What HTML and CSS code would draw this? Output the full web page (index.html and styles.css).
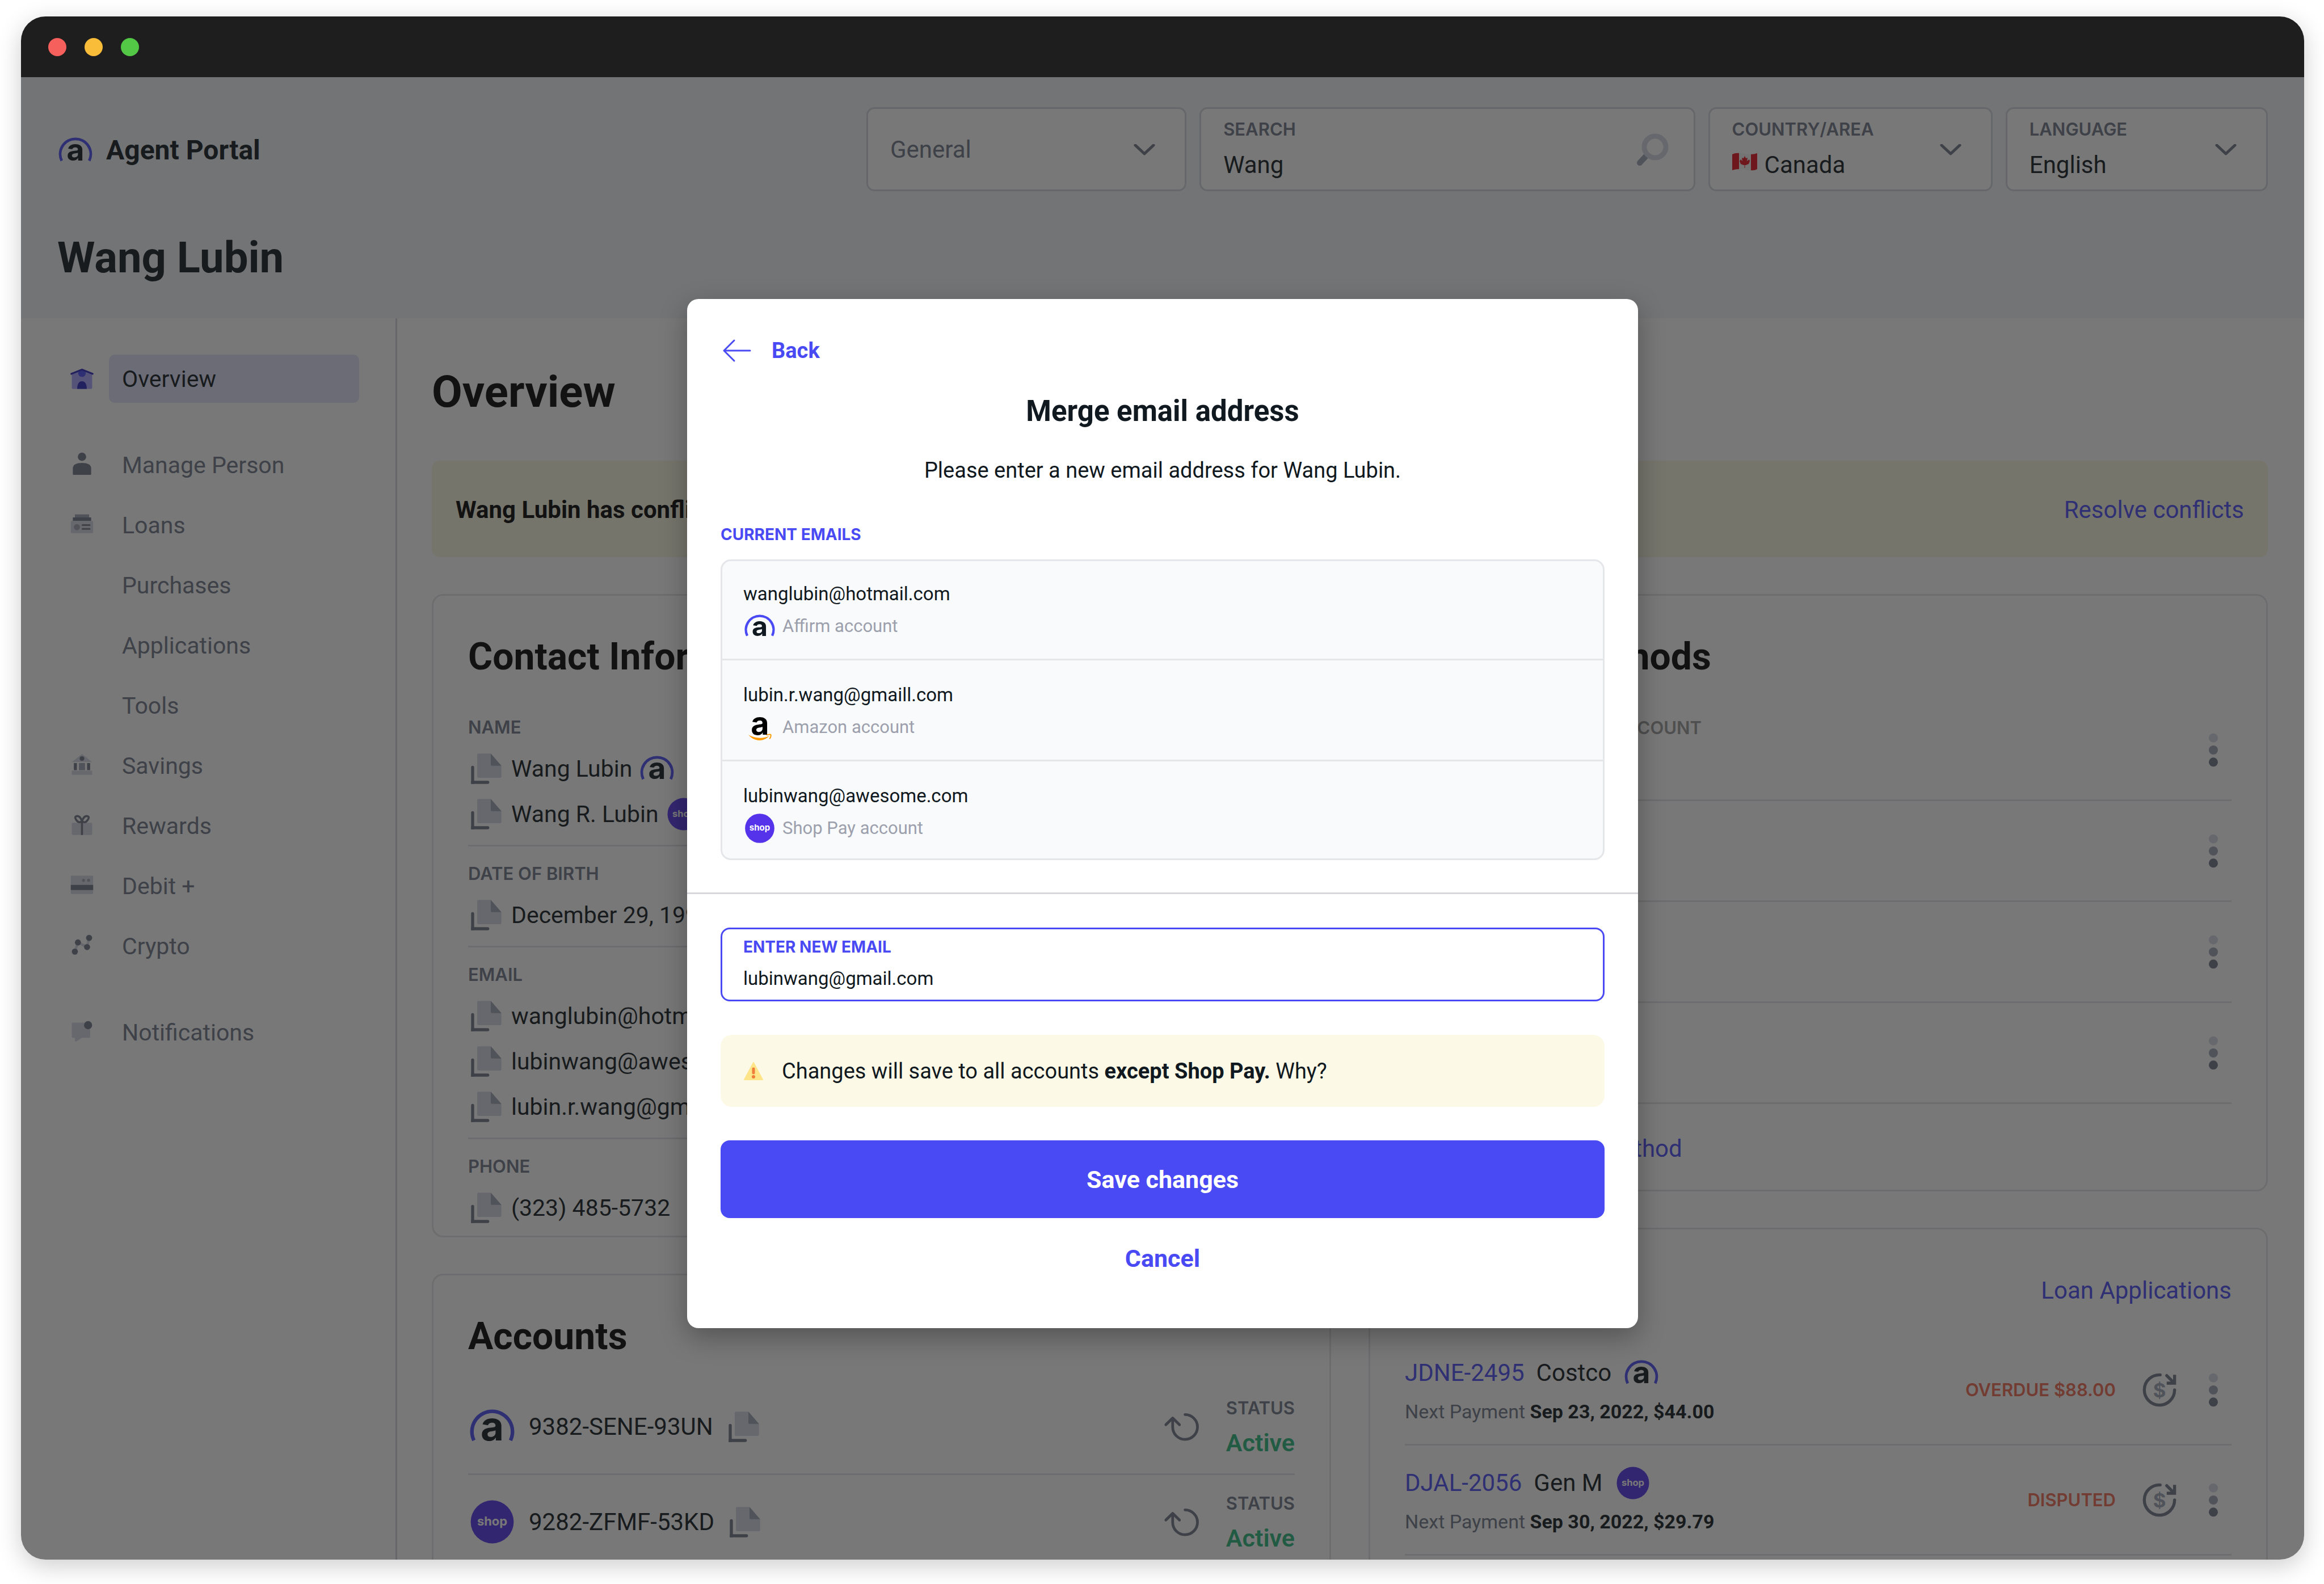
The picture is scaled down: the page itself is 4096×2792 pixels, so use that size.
FILE: index.html
```html
<!DOCTYPE html>
<html lang="en">
<head>
<meta charset="utf-8">
<title>Agent Portal</title>
<link rel="stylesheet" href="styles.css">
</head>
<body>
<svg class="sprite" aria-hidden="true">
  <symbol id="affirm" viewBox="0 0 24 24">
    <path d="M2.900 18.900A10.100 10.100 0 1 1 21.100 18.900" fill="none" stroke="#4a4af4" stroke-width="1.800"/>
    <text x="12" y="18.900" class="logo-letter" font-size="20" text-anchor="middle" fill="#101820">a</text>
  </symbol>
  <symbol id="amazon" viewBox="0 0 24 24">
    <text x="12.200" y="17.200" class="logo-letter" font-size="23" text-anchor="middle" fill="#000">a</text>
    <path d="M3.800 17.500C8 20 14.500 20.600 19 18.200C15 22.800 8 22.600 3.800 17.500Z" fill="#ff9900"/>
    <path d="M17 17.700C18 17.200 19.800 17 20.100 17.500C20.400 18.200 19.800 19.700 19.100 20.400" fill="none" stroke="#ff9900" stroke-width=".8"/>
  </symbol>
  <symbol id="shop" viewBox="0 0 24 24">
    <circle cx="12" cy="12" r="10.700" fill="#5433eb"/>
    <text x="12" y="13.700" class="logo-letter" font-size="6.200" text-anchor="middle" fill="#fff">shop</text>
  </symbol>
  <symbol id="copy" viewBox="0 0 24 24">
    <path d="M6.800 2H15L22 10V17.200Q22 18 21.200 18H6.800Q6 18 6 17.200V2.800Q6 2 6.800 2Z" fill="#d2d7e4"/>
    <path d="M15 2L22 10H15.700Q15 10 15 9.300Z" fill="#9ba3b4"/>
    <path d="M3 11V21H13" fill="none" stroke="#6e7588" stroke-width="2" stroke-linecap="round"/>
    <path d="M2 20h2v2h-2z" fill="#6e7588"/>
  </symbol>
  <symbol id="kebab" viewBox="0 0 24 24">
    <circle cx="12" cy="4" r="3" fill="#d2d7e4"/><circle cx="12" cy="12" r="3" fill="#9ba3b4"/><circle cx="12" cy="20" r="3" fill="#6e7588"/>
  </symbol>
  <symbol id="refund" viewBox="0 0 24 24">
    <g fill="none" stroke="#6e7588" stroke-width="2" stroke-linecap="round">
      <path d="M12.500 2A10 10 0 1 0 22 12"/><path d="M16.800 2.500L21.500 7.200"/><path d="M22 2V7.500H16.800" stroke-linecap="butt"/>
    </g>
    <text x="12" y="16.700" class="logo-letter" font-size="13" text-anchor="middle" fill="#9ba3b4">$</text>
  </symbol>
  <symbol id="redo" viewBox="0 0 24 24">
    <g fill="none" stroke="#6e7588" stroke-width="1.800" stroke-linecap="round" stroke-linejoin="round">
      <path d="M14.500 3.900A8.200 8.200 0 1 1 6.300 12V6.500"/><path d="M1.800 10.600L6.300 6.200L10.800 10.600"/>
    </g>
  </symbol>
  <symbol id="chevron" viewBox="0 0 38 20">
    <path d="M3 2L19 17L35 2" fill="none" stroke="#6e7588" stroke-width="5" stroke-linecap="round" stroke-linejoin="round"/>
  </symbol>
</svg>

<div class="window">
  <div class="titlebar"><i class="dot red"></i><i class="dot yellow"></i><i class="dot green"></i></div>

  <div class="screen">
    <header class="header">
      <div class="topbar">
        <a class="brand" href="#"><svg class="i64"><use href="#affirm"/></svg>Agent Portal</a>
        <form class="filters">
          <div class="field">
            <select class="value muted" aria-label="Category"><option>General</option></select>
            <svg class="chevron"><use href="#chevron"/></svg>
          </div>
          <div class="field search">
            <div class="stack">
              <label class="label" for="q">SEARCH</label>
              <input class="value" id="q" type="text" value="Wang">
            </div>
            <svg class="lens" viewBox="0 0 58 58"><path d="M20 38L7 52" stroke="#9ba3b4" stroke-width="10" stroke-linecap="round"/><circle cx="34" cy="24" r="19" fill="none" stroke="#d2d7e4" stroke-width="9"/></svg>
          </div>
          <div class="field">
            <div class="stack">
              <label class="label" for="country">COUNTRY/AREA</label>
              <div class="flagged">
                <svg class="flag" viewBox="0 0 44 32"><path d="M0 3Q11-2 22 2T44 1V29Q33 34 22 30T0 31Z" fill="#f4f4f4"/><path d="M0 3Q6 0 12 1V29Q6 29 0 31ZM33 3Q39 3 44 1V29Q39 32 33 31Z" fill="#e5101c"/><path d="M22 6L24 10L27 9L26 15L30 12L31 15L29 20L24 22L22.500 22V27H21.500V22L20 22L15 20L13 15L15 12L18 15L17 9L20 10Z" fill="#e5101c"/></svg>
                <select class="value" id="country"><option>Canada</option></select>
              </div>
            </div>
            <svg class="chevron"><use href="#chevron"/></svg>
          </div>
          <div class="field">
            <div class="stack">
              <label class="label" for="lang">LANGUAGE</label>
              <select class="value" id="lang"><option>English</option></select>
            </div>
            <svg class="chevron"><use href="#chevron"/></svg>
          </div>
        </form>
      </div>
      <h1 class="person">Wang Lubin</h1>
    </header>

    <div class="main">
      <nav class="sidebar">
        <a class="nav active" href="#"><svg viewBox="0 0 48 48"><path d="M4 14L24 6L44 14V42Q44 44 42 44H6Q4 44 4 42Z" fill="#a9a5ff"/><circle cx="24" cy="13" r="7.500" fill="#4a4af4"/><path d="M14.500 44Q15 29 24 29T33.500 44Z" fill="#2823c1"/><path d="M3 14.500L24 6L45 14.500" fill="none" stroke="#2823c1" stroke-width="3.500" stroke-linecap="round"/></svg><span>Overview</span></a>
        <a class="nav spaced" href="#"><svg viewBox="0 0 48 48"><circle cx="24" cy="8" r="8.200" fill="#6e7588"/><path d="M6 42V31Q6 20 24 20T42 31V42Q42 43.500 40.500 43.500H7.500Q6 43.500 6 42Z" fill="#6e7588"/></svg><span>Manage Person</span></a>
        <a class="nav" href="#"><svg viewBox="0 0 48 48"><path d="M10 3H38V9H10Z" fill="#9ba3b4"/><path d="M6 9H42V16H6Z" fill="#6e7588"/><rect x="2" y="16" width="44" height="24" rx="2" fill="#d2d7e4"/><circle cx="14" cy="28" r="6" fill="#9ba3b4"/><path d="M25 24H39M25 31.500H39" stroke="#6e7588" stroke-width="3.500" stroke-linecap="round"/></svg><span>Loans</span></a>
        <a class="nav" href="#"><i></i><span>Purchases</span></a>
        <a class="nav" href="#"><i></i><span>Applications</span></a>
        <a class="nav" href="#"><i></i><span>Tools</span></a>
        <a class="nav" href="#"><svg viewBox="0 0 48 48"><path d="M24 1L44 17H4ZM4 34H44V42H4Z" fill="#d2d7e4"/><circle cx="24" cy="10" r="4.500" fill="#6e7588"/><path d="M8 19H14V33H8ZM34 19H40V33H34Z" fill="#6e7588"/><path d="M18 19H30V33H18Z" fill="#9ba3b4"/></svg><span>Savings</span></a>
        <a class="nav" href="#"><svg viewBox="0 0 48 48"><rect x="4" y="18" width="40" height="24" rx="2" fill="#d2d7e4"/><path d="M24 15Q20 4 14 5T13 13T24 15V42M24 15Q28 4 34 5T35 13T24 15" fill="none" stroke="#6e7588" stroke-width="4"/></svg><span>Rewards</span></a>
        <a class="nav" href="#"><svg viewBox="0 0 48 48"><rect x="2" y="4" width="44" height="36" rx="2" fill="#d2d7e4"/><path d="M2 22H46V32H2Z" fill="#6e7588"/><circle cx="27" cy="13" r="3" fill="#9ba3b4"/><circle cx="37" cy="13" r="3" fill="#9ba3b4"/></svg><span>Debit +</span></a>
        <a class="nav" href="#"><svg viewBox="0 0 48 48"><path d="M10 35L16 17L34 26L38 8" fill="none" stroke="#d2d7e4" stroke-width="5"/><g fill="#6e7588"><circle cx="10" cy="35" r="6"/><circle cx="16" cy="17" r="6"/><circle cx="34" cy="26" r="6"/><circle cx="38" cy="8" r="6"/></g></svg><span>Crypto</span></a>
        <a class="nav spaced" href="#"><svg viewBox="0 0 48 48"><path d="M6 5H40V35H24L13 42Q10 43 10 40V35H6Q4 35 4 33V7Q4 5 6 5Z" fill="#d2d7e4"/><circle cx="36" cy="10" r="8" fill="#6e7588"/></svg><span>Notifications</span></a>
      </nav>

      <main class="content">
        <h2 class="page-title">Overview</h2>
        <div class="banner"><strong>Wang Lubin has conflicting information</strong><a href="#">Resolve conflicts</a></div>

        <div class="columns">
          <div class="column">
            <section class="card contact">
              <h3>Contact Information</h3>
              <div class="group">
                <div class="label">NAME</div>
                <div class="line"><svg class="i64"><use href="#copy"/></svg>Wang Lubin<svg class="i64"><use href="#affirm"/></svg></div>
                <div class="line"><svg class="i64"><use href="#copy"/></svg>Wang R. Lubin<svg class="i64"><use href="#shop"/></svg></div>
              </div>
              <div class="group">
                <div class="label">DATE OF BIRTH</div>
                <div class="line"><svg class="i64"><use href="#copy"/></svg>December 29, 1990</div>
              </div>
              <div class="group">
                <div class="label">EMAIL</div>
                <div class="line"><svg class="i64"><use href="#copy"/></svg>wanglubin@hotmail.com</div>
                <div class="line"><svg class="i64"><use href="#copy"/></svg>lubinwang@awesome.com</div>
                <div class="line"><svg class="i64"><use href="#copy"/></svg>lubin.r.wang@gmaill.com</div>
              </div>
              <div class="group">
                <div class="label">PHONE</div>
                <div class="line"><svg class="i64"><use href="#copy"/></svg>(323) 485-5732</div>
              </div>
            </section>

            <section class="card listing">
              <h3>Accounts</h3>
              <div class="account">
                <svg class="i85"><use href="#affirm"/></svg><span>9382-SENE-93UN</span><svg class="i64"><use href="#copy"/></svg>
                <svg class="i64 push"><use href="#redo"/></svg>
                <div class="status"><div class="label">STATUS</div><div class="active-text">Active</div></div>
              </div>
              <div class="account">
                <svg class="i85"><use href="#shop"/></svg><span>9282-ZFMF-53KD</span><svg class="i64"><use href="#copy"/></svg>
                <svg class="i64 push"><use href="#redo"/></svg>
                <div class="status"><div class="label">STATUS</div><div class="active-text">Active</div></div>
              </div>
            </section>
          </div>

          <div class="column">
            <section class="card listing">
              <h3>Payment Methods</h3>
              <div class="method"><div class="label pale">PRIMARY BANK ACCOUNT</div><button class="icon-button" aria-label="More"><svg class="dots"><use href="#kebab"/></svg></button></div>
              <div class="method"><button class="icon-button" aria-label="More"><svg class="dots"><use href="#kebab"/></svg></button></div>
              <div class="method"><button class="icon-button" aria-label="More"><svg class="dots"><use href="#kebab"/></svg></button></div>
              <div class="method"><button class="icon-button" aria-label="More"><svg class="dots"><use href="#kebab"/></svg></button></div>
              <a class="add" href="#">Add new payment method</a>
            </section>

            <section class="card listing loans">
              <div class="card-head"><h3>Loans</h3><a href="#">Loan Applications</a></div>
              <div class="loan">
                <div class="loan-text">
                  <div class="loan-name"><a href="#">JDNE-2495</a><span>Costco</span><svg class="i64"><use href="#affirm"/></svg></div>
                  <div class="next">Next Payment <b>Sep 23, 2022, $44.00</b></div>
                </div>
                <span class="flagged-state">OVERDUE $88.00</span>
                <svg class="i64"><use href="#refund"/></svg>
                <button class="icon-button" aria-label="More"><svg class="dots"><use href="#kebab"/></svg></button>
              </div>
              <div class="loan">
                <div class="loan-text">
                  <div class="loan-name"><a href="#">DJAL-2056</a><span>Gen M</span><svg class="i64"><use href="#shop"/></svg></div>
                  <div class="next">Next Payment <b>Sep 30, 2022, $29.79</b></div>
                </div>
                <span class="flagged-state">DISPUTED</span>
                <svg class="i64"><use href="#refund"/></svg>
                <button class="icon-button" aria-label="More"><svg class="dots"><use href="#kebab"/></svg></button>
              </div>
            </section>
          </div>
        </div>
      </main>
    </div>

    <div class="overlay">
      <div class="modal" role="dialog" aria-labelledby="modal-title">
        <div class="modal-top">
          <a class="back" href="#"><svg viewBox="0 0 50 40"><path d="M20 2L2 20L20 38M2 20H48" fill="none" stroke="#4a4af4" stroke-width="3" stroke-linecap="round" stroke-linejoin="round"/></svg>Back</a>
          <h2 class="modal-title" id="modal-title">Merge email address</h2>
          <p class="lead">Please enter a new email address for Wang Lubin.</p>
          <div class="modal-label">CURRENT EMAILS</div>
          <ul class="emails">
            <li><div class="address">wanglubin@hotmail.com</div><div class="source"><svg><use href="#affirm"/></svg>Affirm account</div></li>
            <li><div class="address">lubin.r.wang@gmaill.com</div><div class="source"><svg><use href="#amazon"/></svg>Amazon account</div></li>
            <li><div class="address">lubinwang@awesome.com</div><div class="source"><svg><use href="#shop"/></svg>Shop Pay account</div></li>
          </ul>
        </div>
        <form class="modal-form">
          <div class="email-field">
            <label class="modal-label" for="new-email">ENTER NEW EMAIL</label>
            <input class="address" id="new-email" type="text" value="lubinwang@gmail.com">
          </div>
          <div class="notice"><svg viewBox="0 0 34 32"><path d="M17 1L33 31H1Z" fill="#ffe58a" stroke="#ffe58a" stroke-width="2" stroke-linejoin="round"/><path d="M17 12V19" stroke="#f07d3a" stroke-width="5" stroke-linecap="round"/><circle cx="17" cy="26" r="3" fill="#f07d3a"/></svg><p>Changes will save to all accounts <b>except Shop Pay.</b> Why?</p></div>
          <button class="save" type="button">Save changes</button>
          <button class="cancel" type="button">Cancel</button>
        </form>
      </div>
    </div>
  </div>
</div>
</body>
</html>
```
FILE: styles.css
```css
* { box-sizing: border-box; margin: 0; padding: 0; }

:root {
  --ink: #101820;
  --gray: #6e7588;
  --indigo: #4a4af4;
  --line: #e4e4e8;
}

body {
  height: 100vh;
  padding: 29px 35px 43px 37px;
  background: #fff;
  color: var(--ink);
  font: 42px/50px Roboto, "Liberation Sans", sans-serif;
}

a { color: var(--indigo); text-decoration: none; }
svg { display: block; flex: none; overflow: visible; }
input, select, button { font: inherit; color: inherit; border: 0; background: none; appearance: none; }
ul { list-style: none; }

.sprite { display: none; }
.logo-letter { font-family: Inter, sans-serif; font-weight: 700; }
.i64 { width: 64px; height: 64px; }
.i85 { width: 85px; height: 85px; }

/* Window frame */
.window {
  display: flex;
  flex-direction: column;
  height: 100%;
  border-radius: 43px;
  overflow: hidden;
  background: #fff;
  box-shadow: 0 11px 43px rgba(0, 0, 0, .2);
}
.titlebar { display: flex; flex: none; align-items: center; gap: 32px; height: 107px; padding-left: 48px; background: #1e1e1e; }
.dot { width: 32px; height: 32px; border-radius: 50%; }
.red { background: #f5605c; }
.yellow { background: #fabd3a; }
.green { background: #52c846; }
.screen { position: relative; flex: 1; min-height: 0; overflow: hidden; }

/* Header */
.header { height: 425px; padding: 53px 64px 0; background: #f2f5fa; }
.topbar { display: flex; align-items: center; justify-content: space-between; }
.brand { display: flex; align-items: center; gap: 22px; padding-top: 4px; color: var(--ink); font-size: 48px; font-weight: 700; }
.filters { display: grid; grid-template-columns: 564fr 873fr 501fr 462fr; gap: 23px; width: 63.4%; }
.field {
  display: flex;
  align-items: center;
  justify-content: space-between;
  height: 148px;
  min-width: 0;
  padding: 2px 52px 0 39px;
  border: 3px solid #d2d4de;
  border-radius: 14px;
  background: #fff;
}
.field.search { padding-right: 44px; }
.stack { display: flex; flex-direction: column; gap: 17px; min-width: 0; padding-bottom: 3px; }
.label { color: var(--gray); font: 600 31px/40px Inter, sans-serif; }
.value { width: 100%; min-width: 0; height: 52px; line-height: 52px; outline: 0; }
.muted { color: var(--gray); }
.flagged { display: flex; gap: 13px; }
.flag { width: 44px; height: 32px; margin-top: 4px; }
.chevron { width: 38px; height: 20px; }
.lens { width: 58px; height: 58px; }
.person { margin-top: 72px; font-size: 76px; line-height: 90px; }

/* Body */
.main { display: flex; align-items: stretch; }
.sidebar { flex: none; width: 663px; padding: 64px 64px 0 86px; border-right: 3px solid #d2d2de; }
.nav { display: grid; grid-template-columns: 43px 1fr; gap: 26px; align-items: center; margin-bottom: 21px; color: var(--gray); font-size: 41px; line-height: 83px; }
.nav svg { width: 43px; height: 43px; }
.nav span { padding: 2px 0 0 23px; border-radius: 10px; }
.nav.spaced { margin-top: 67px; }
.active { color: var(--ink); }
.active span { background: #e1e1fd; }

.content { flex: 1; min-width: 0; padding: 85px 64px 0 61px; color: var(--ink); }
.page-title { color: #000; font-size: 78px; line-height: 90px; }
.banner { display: flex; align-items: center; justify-content: space-between; height: 170px; margin-top: 76px; padding: 4px 42px 0; border-radius: 14px; background: #fbf8e1; }
.banner strong { color: #000; }
.columns { display: grid; grid-template-columns: 1fr 1fr; gap: 66px; align-items: start; margin-top: 65px; }
.column { display: grid; gap: 64px; min-width: 0; }

.card { min-width: 0; padding: 68px 61px 0; border: 3px solid var(--line); border-radius: 20px; }
.card h3 { color: #000; font-size: 66px; line-height: 80px; }
.contact h3 { margin-bottom: 36px; }
.group { padding: 28px 0 14px; }
.group + .group { border-top: 3px solid var(--line); }
.group:last-child { padding-bottom: 9px; }
.group .label { margin-bottom: 13px; }
.line { display: flex; align-items: center; gap: 12px; height: 80px; font-size: 41px; white-space: nowrap; }

.listing h3 { margin-bottom: 36px; }
.account { display: flex; align-items: center; height: 168px; border-bottom: 3px solid var(--line); }
.account span { margin: 0 22px; }
.push { margin-left: auto; }
.status { width: 168px; text-align: right; }
.active-text { margin-top: 16px; color: #2ab67b; font-size: 43px; font-weight: 600; }

.method { display: flex; align-items: center; justify-content: flex-end; height: 178px; border-bottom: 3px solid var(--line); }
.method .label { flex: 1; align-self: flex-start; margin-top: 29px; padding-left: 120px; }
.pale { color: #9a9a9a; }
.icon-button { width: 64px; height: 64px; }
.dots { width: 64px; height: 64px; }
.add { display: block; padding: 54px 0 47px; }

.loans { padding-bottom: 200px; }
.card-head { display: flex; justify-content: space-between; margin-bottom: 3px; line-height: 80px; }
.loan { display: flex; align-items: center; height: 194px; border-bottom: 3px solid var(--line); }
.loan-text { flex: 1; }
.loan-name { display: flex; align-items: center; height: 60px; }
.loan-name span { margin: 0 21px; }
.next { margin-top: 16px; color: var(--gray); font-size: 34px; line-height: 44px; }
.next b { color: var(--ink); }
.flagged-state { margin-right: 45px; color: #f06a50; font: 600 31px/40px Inter, sans-serif; }
.loan .icon-button { margin-left: 31px; }

/* Dialog */
.overlay { position: absolute; inset: 0; display: flex; align-items: flex-start; justify-content: center; padding-top: 391px; background: rgba(30, 30, 30, .6); }
.modal { width: 1676px; border-radius: 20px; background: #fff; box-shadow: 0 16px 48px rgba(0, 0, 0, .3); font-size: 38px; line-height: 48px; }
.modal-top { padding: 67px 59px 57px; border-bottom: 3px solid #d8d8dc; }
.back { display: flex; align-items: center; gap: 36px; padding-left: 4px; font-weight: 700; }
.back svg { width: 50px; height: 40px; }
.modal-title { margin-top: 53px; font-size: 51px; line-height: 60px; text-align: center; }
.lead { margin-top: 50px; text-align: center; }
.modal-label { display: block; color: var(--indigo); font: 700 28px/36px Inter, sans-serif; }
.lead + .modal-label { margin-top: 71px; }
.emails { margin-top: 26px; border: 3px solid #e4e6ea; border-radius: 18px; background: #f9fafc; }
.emails li { padding: 34px 37px 28px; }
.emails li + li { padding-top: 37px; border-top: 3px solid #e4e6ea; }
.emails li:last-child { padding-bottom: 24px; }
.address { font-size: 33px; line-height: 48px; }
.source { display: flex; align-items: center; gap: 11px; height: 58px; margin-top: 4px; color: #9ca0ac; font-size: 31px; }
.source svg { width: 58px; height: 58px; }

.modal-form { display: grid; padding: 59px 59px 95px; }
.email-field { display: grid; align-content: center; gap: 14px; height: 130px; padding: 0 37px; border: 3px solid var(--indigo); border-radius: 16px; }
.email-field input { width: 100%; height: 48px; outline: 0; }
.notice { display: flex; align-items: center; gap: 33px; height: 127px; margin-top: 59px; padding-left: 41px; border-radius: 20px; background: #fcf9e7; }
.notice svg { width: 34px; height: 32px; }
.save { height: 137px; margin-top: 59px; border-radius: 16px; background: var(--indigo); color: #fff; font-size: 43px; font-weight: 700; }
.cancel { justify-self: center; margin-top: 43px; color: var(--indigo); font-size: 43px; font-weight: 700; line-height: 56px; }
```
